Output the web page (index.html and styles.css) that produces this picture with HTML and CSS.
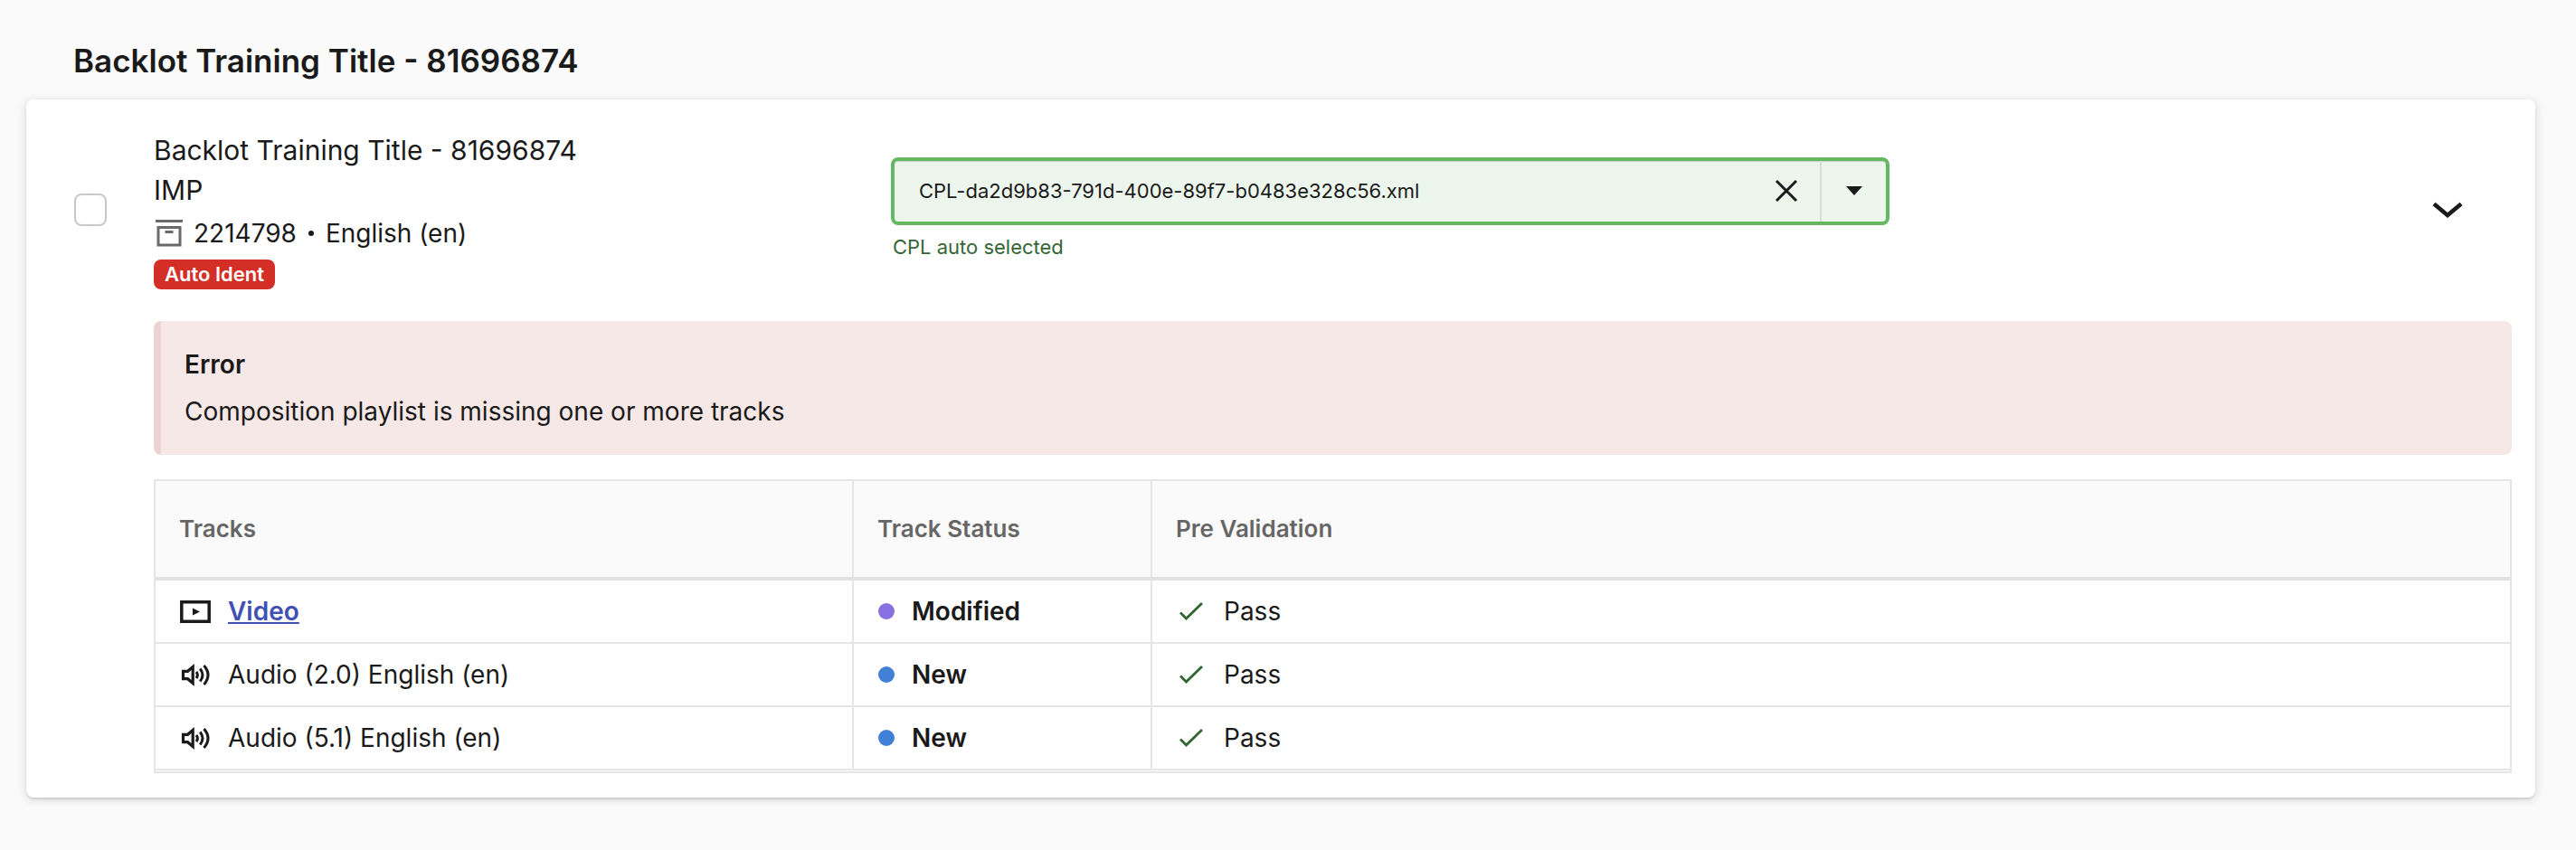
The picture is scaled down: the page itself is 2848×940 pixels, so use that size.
FILE: index.html
```html
<!DOCTYPE html>
<html lang="en">
<head>
<meta charset="utf-8">
<title>Backlot Training Title</title>
<link rel="stylesheet" href="styles.css">
</head>
<body>
<svg class="sprite" aria-hidden="true">
  <symbol id="i-audio" viewBox="0 0 36 32"><path d="M4.500 12.300H9.500L15.200 7.500v18L9.500 20.700H4.500Z" fill="none" stroke="currentColor" stroke-width="3.200"/><path d="M19 13q2.800 3.500 0 7M23.200 9.500q5.600 7 0 14M27.500 6q9 10.500 0 21" fill="none" stroke="currentColor" stroke-width="3"/></symbol>
  <symbol id="i-check" viewBox="0 0 28 22"><path d="M2 12.500 8.500 19 26 2" fill="none" stroke="currentColor" stroke-width="2.800"/></symbol>
</svg>
<main class="page">
  <h1 class="page-title">Backlot Training Title - 81696874</h1>
  <section class="card">
    <div class="summary">
      <input class="pick" type="checkbox" aria-label="Select Backlot Training Title - 81696874">
      <div class="info">
        <div class="info-title">Backlot Training Title - 81696874<br>IMP</div>
        <div class="meta">
          <svg class="meta-icon" viewBox="0 0 32 32" aria-hidden="true"><path d="M1 2.500h30M4 9.500h24v19.500H4Z" fill="none" stroke="currentColor" stroke-width="3"/><path d="M11.500 14.500h9" stroke="currentColor" stroke-width="3"/></svg>
          <span>2214798</span><span class="bullet"></span><span>English (en)</span>
        </div>
        <span class="badge">Auto Ident</span>
      </div>
      <div class="picker">
        <div class="combo">
          <input class="combo-input" id="cpl" type="text" value="CPL-da2d9b83-791d-400e-89f7-b0483e328c56.xml" aria-label="Composition playlist" aria-describedby="cpl-help">
          <button class="combo-clear" type="button" aria-label="Clear"><svg class="clear-icon" viewBox="0 0 26 26"><path d="M2 2 24 24M24 2 2 24" stroke="currentColor" stroke-width="3"/></svg></button>
          <button class="combo-open" type="button" aria-label="Open list"><svg class="caret-icon" viewBox="0 0 18 10"><path d="M0 0h18L9 10Z" fill="currentColor"/></svg></button>
        </div>
        <div class="help" id="cpl-help">CPL auto selected</div>
      </div>
      <button class="toggle" type="button" aria-label="Collapse"><svg class="chevron" viewBox="0 0 34 18"><path d="M2 2.500 17 15 32 2.500" fill="none" stroke="currentColor" stroke-width="4.600"/></svg></button>
    </div>
    <div class="details">
      <div class="alert" role="alert">
        <h2 class="alert-title">Error</h2>
        <p class="alert-text">Composition playlist is missing one or more tracks</p>
      </div>
      <div class="table-frame">
        <table class="tracks">
          <colgroup><col class="col-track"><col class="col-status"><col></colgroup>
          <thead><tr><th>Tracks</th><th>Track Status</th><th>Pre Validation</th></tr></thead>
          <tbody>
            <tr>
              <td><div class="cell"><svg class="track-icon" viewBox="0 0 36 32" aria-hidden="true"><path d="M2.800 5.800h30.400v21.400H2.800Z" fill="none" stroke="currentColor" stroke-width="3.500"/><path d="M15 12.500v8l8-4Z" fill="currentColor"/></svg><a class="link" href="#video">Video</a></div></td>
              <td><div class="cell strong"><span class="dot modified"></span>Modified</div></td>
              <td><div class="cell pass"><svg class="check" aria-hidden="true"><use href="#i-check"/></svg>Pass</div></td>
            </tr>
            <tr>
              <td><div class="cell"><svg class="track-icon" aria-hidden="true"><use href="#i-audio"/></svg>Audio (2.0) English (en)</div></td>
              <td><div class="cell strong"><span class="dot"></span>New</div></td>
              <td><div class="cell pass"><svg class="check" aria-hidden="true"><use href="#i-check"/></svg>Pass</div></td>
            </tr>
            <tr>
              <td><div class="cell"><svg class="track-icon" aria-hidden="true"><use href="#i-audio"/></svg>Audio (5.1) English (en)</div></td>
              <td><div class="cell strong"><span class="dot"></span>New</div></td>
              <td><div class="cell pass"><svg class="check" aria-hidden="true"><use href="#i-check"/></svg>Pass</div></td>
            </tr>
          </tbody>
        </table>
      </div>
    </div>
  </section>
</main>
</body>
</html>
```
FILE: styles.css
```css
* { box-sizing: border-box; }
body { margin: 0; background: #fafafa; color: #1a1a1a; font: 28px/44px Inter, "Liberation Sans", sans-serif; }
.sprite { position: absolute; width: 0; height: 0; }
.page { padding: 45px 45px 50px 29px; }
.page-title { margin: 0 0 21px; padding-left: 52px; font-size: 35px; line-height: 44px; font-weight: 600; }
.card { background: #fff; border-radius: 8px; padding: 34px 26px 27px 53px; box-shadow: 0 2px 2px rgba(0,0,0,.1), 0 2px 12px rgba(0,0,0,.14); }
.summary { display: flex; align-items: center; }
.pick { appearance: none; flex: none; width: 36px; height: 36px; margin: 0 52px 0 0; border: 2px solid #c9c9c9; border-radius: 8px; background: #fff; }
.info { flex: 31; min-width: 0; }
.info-title { font-size: 30px; }
.meta { display: flex; align-items: center; height: 52px; }
.meta-icon { width: 32px; height: 32px; margin: 0 11px 0 1px; color: #6a6a6a; }
.bullet { width: 6px; height: 6px; margin: 0 13px; border-radius: 50%; background: currentColor; }
.badge { display: block; width: max-content; margin-top: 3px; padding: 0 12px; border-radius: 8px; background: #d32f27; color: #fff; font-size: 22px; line-height: 33px; font-weight: 600; }
.picker { flex: 42; min-width: 0; padding-bottom: 2px; }
.combo { display: flex; height: 75px; border: 4px solid #65b762; border-radius: 8px; background: #edf6ed; box-shadow: inset 0 1px 1px rgba(0,0,0,.15); }
.combo-input { flex: 1; min-width: 0; padding: 0 27px; border: 0; background: none; color: inherit; font: inherit; font-size: 22px; outline: 0; }
.combo-clear, .combo-open, .toggle { display: flex; align-items: center; justify-content: center; padding: 0; border: 0; background: none; color: inherit; }
.combo-clear { width: 74px; }
.combo-open { width: 73px; border-left: 2px solid #d8dfd8; }
.clear-icon { width: 26px; height: 26px; }
.caret-icon { width: 18px; height: 10px; }
.help { padding: 8px 2px 0; color: #356635; font-size: 22px; line-height: 32px; }
.toggle { flex: none; width: 34px; margin: 0 54px 0 600px; }
.chevron { width: 34px; height: 18px; }
.details { padding: 35px 0 0 88px; }
.alert { padding: 26px; border-left: 8px solid #edd3d0; border-radius: 8px; background: #f6e8e7; }
.alert-title, .alert-text { margin: 0; font-size: 28px; }
.alert-title { font-weight: 600; margin-bottom: 8px; }
.table-frame { margin-top: 27px; border: 2px solid #e5e5e5; padding-bottom: 1px; }
.tracks { width: 100%; table-layout: fixed; border-collapse: separate; border-spacing: 0; }
.col-track { width: 770px; }
.col-status { width: 330px; }
th, td { padding: 0 26px; text-align: left; border-bottom: 2px solid #e5e5e5; }
th + th, td + td { border-left: 2px solid #e5e5e5; }
th { height: 110px; border-bottom: 4px solid #e1e1e1; background: #fafafa; color: #666; font-size: 26px; font-weight: 600; }
.cell { display: flex; align-items: center; height: 68px; }
.strong { font-weight: 600; }
.track-icon { width: 36px; height: 32px; margin-right: 18px; }
.dot { width: 18px; height: 18px; margin: 0 19px 0 1px; border-radius: 50%; background: #4180d6; }
.modified { background: #8970e0; }
.check { width: 28px; height: 22px; margin: 0 22px 0 3px; color: #2f662f; }
.link { color: #3f51b5; font-weight: 600; text-underline-offset: 2px; text-decoration-thickness: 2px; }
```
